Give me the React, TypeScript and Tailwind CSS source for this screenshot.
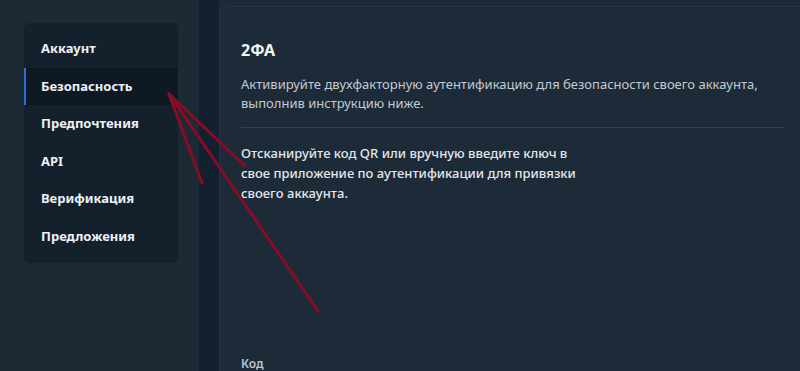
import React from "react";

const items = ["Аккаунт", "Безопасность", "Предпочтения", "API", "Верификация", "Предложения"];

export default function App() {
  return (
    <div
      className="relative w-[800px] h-[371px] overflow-hidden bg-[#1c2a36] flex"
      style={{ fontFamily: '"Noto Sans", "Open Sans", sans-serif' }}
    >
      <div className="w-[199px] shrink-0 pl-[24px] pt-[23px]">
        <div className="w-[154px] rounded-[6px] bg-[#14202c] py-[7px]">
          {items.map((it, i) => (
            <div
              key={it}
              className={
                "h-[37.6px] flex items-center pl-[15px] text-[13px] font-bold text-[#eef1f4] border-l-2 " +
                (i === 1 ? "bg-[#0e1924] border-[#2e6fd6]" : "border-transparent")
              }
            >
              {it}
            </div>
          ))}
        </div>
      </div>
      <div className="w-[20px] shrink-0 bg-[#132030]" />
      <div className="flex-1 mt-[6px] rounded-tl-[8px] bg-[#1d2b38] border-l border-t border-[#263545] pl-[21px] pr-[15px] pt-[33px] flex flex-col">
        <div className="text-[16px] font-bold text-[#f2f4f6] leading-[20px]">2ФА</div>
        <p className="mt-[15px] text-[13px] leading-[19px] text-[#c3cad2] pr-[10px]">
          Активируйте двухфакторную аутентификацию для безопасности своего аккаунта, выполнив инструкцию ниже.
        </p>
        <div className="mt-[14px] h-px bg-[#33414f]" />
        <p className="mt-[15px] w-[345px] text-[13px] leading-[20px] font-medium text-[#e3e7eb]">
          Отсканируйте код QR или вручную введите ключ в свое приложение по аутентификации для привязки своего аккаунта.
        </p>
        <div className="mt-auto -mb-[1px] text-[12px] leading-[16px] font-semibold text-[#bcc5cf]">Код</div>
      </div>
      <svg className="absolute inset-0 pointer-events-none" width="800" height="371">
        <g stroke="#8a0b26" strokeWidth="3" strokeLinecap="round" fill="none">
          <line x1="169" y1="94" x2="202" y2="183" />
          <line x1="169" y1="94" x2="245" y2="166" />
          <line x1="169" y1="94" x2="318" y2="311" />
        </g>
      </svg>
    </div>
  );
}
